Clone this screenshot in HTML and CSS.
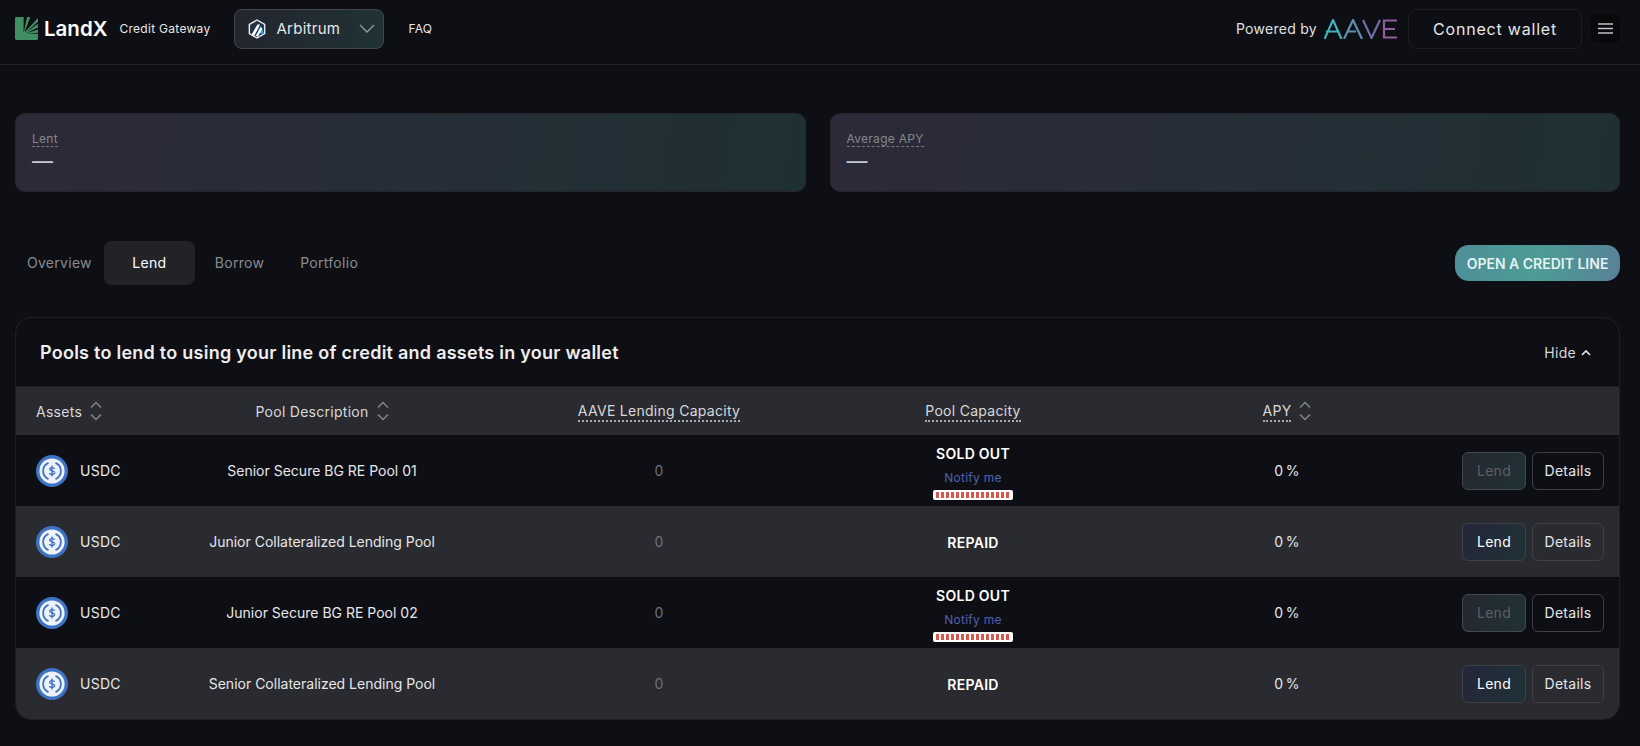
FILE: index.html
```html
<!DOCTYPE html>
<html lang="en">
<head>
    <meta charset="UTF-8">
    <title>LandX Credit Gateway</title>
    <link rel="stylesheet" href="styles.css">
</head>
<body>
    <header class="topbar">
        <div class="topbar-left">
            <a class="logo">
                <svg class="logo-mark" width="23" height="23" viewBox="0 0 24 24">
                    <path d="M1.5 0H22.5Q24 0 24 1.5V22.5Q24 24 22.5 24H1.5Q0 24 0 22.5V1.5Q0 0 1.5 0Z" fill="#3f8f63"/>
                    <path d="M9 17 9 0 12.5 0Z M10 16 16 0 24 0 24 1Z M11 16.5 24 5 24 7Z M11.5 17 24 11 24 13Z M12 17.6 24 16.5 24 17.6Z" fill="#0e0f14"/>
                </svg>
                <span class="logo-text">LandX</span>
            </a>
            <span class="brand-sub">Credit Gateway</span>
            <button class="network">
                <svg width="18" height="20" viewBox="0 0 20 22">
                    <path d="M10 1 18.5 6V16L10 21 1.5 16V6Z" fill="#213147" stroke="#e8ecf2" stroke-width="1.6"/>
                    <path d="M11 13 14 8 17.5 15 15.5 17.5Z" fill="#28a0f0"/>
                    <path d="M4 17 10.5 6H13.5L7 18.5Z M8.5 18.5 14.5 8.5 16 11 11 19.5Z" fill="#fff"/>
                </svg>
                <span class="network-name">Arbitrum</span>
                <svg class="network-caret" width="16" height="9" viewBox="0 0 16 9">
                    <path d="M1 1 8 8 15 1" fill="none" stroke="#9a9ca3" stroke-width="1.3"/>
                </svg>
            </button>
            <a class="faq">FAQ</a>
        </div>
        <div class="topbar-right">
            <span class="powered">Powered by</span>
            <svg class="aave" width="73" height="20" viewBox="0 0 73 20" fill="none" stroke-width="2.2">
                <path d="M0.5 20 9 1 17.5 20M2 12.5H14" stroke="#46b0ba"/>
                <path d="M20 20 29 1 38 20M23 12.5H32" stroke="#5f8fae"/>
                <path d="M39 1 47.5 19 56 1" stroke="#716da0"/>
                <path d="M73 1.5H60V18.5H73M60 10H71" stroke="#8f5f9d"/>
            </svg>
            <button class="connect">Connect wallet</button>
            <button class="menu">
                <svg width="15" height="11" viewBox="0 0 15 11">
                    <path d="M0 1H15M0 5.5H15M0 10H15" stroke="#c0c1c5" stroke-width="1.7"/>
                </svg>
            </button>
        </div>
    </header>

    <main class="page">
        <section class="stats">
            <div class="stat">
                <span class="stat-label">Lent</span>
                <span class="stat-value">—</span>
            </div>
            <div class="stat">
                <span class="stat-label">Average APY</span>
                <span class="stat-value">—</span>
            </div>
        </section>

        <nav class="tabs">
            <a class="tab">Overview</a>
            <a class="tab tab-active">Lend</a>
            <a class="tab">Borrow</a>
            <a class="tab">Portfolio</a>
            <button class="open-credit">OPEN A CREDIT LINE</button>
        </nav>

        <section class="pools">
            <div class="pools-title">
                <h2>Pools to lend to using your line of credit and assets in your wallet</h2>
                <a class="hide">Hide
                    <svg width="10" height="7" viewBox="0 0 10 7"><path d="M1 6 5 2 9 6" fill="none" stroke="#e6e6e8" stroke-width="1.6"/></svg>
                </a>
            </div>

            <div class="row row-head">
                <div class="cell-asset">Assets <svg class="sort" width="12" height="20" viewBox="0 0 12 20"><path d="M1 6.5 6 1.5 11 6.5M1 13.5 6 18.5 11 13.5" fill="none" stroke="#85868b" stroke-width="1.5"/></svg></div>
                <div class="cell-desc">Pool Description <svg class="sort" width="12" height="20" viewBox="0 0 12 20"><path d="M1 6.5 6 1.5 11 6.5M1 13.5 6 18.5 11 13.5" fill="none" stroke="#85868b" stroke-width="1.5"/></svg></div>
                <div class="cell-aave"><span class="dotted">AAVE Lending Capacity</span></div>
                <div class="cell-cap"><span class="dotted">Pool Capacity</span></div>
                <div class="cell-apy"><span class="dotted">APY</span> <svg class="sort" width="12" height="20" viewBox="0 0 12 20"><path d="M1 6.5 6 1.5 11 6.5M1 13.5 6 18.5 11 13.5" fill="none" stroke="#85868b" stroke-width="1.5"/></svg></div>
                <div class="cell-actions"></div>
            </div>

            <div class="row">
                <div class="cell-asset">
                    <svg class="coin" width="32" height="32" viewBox="0 0 32 32"><use href="#usdc"/></svg>
                    <span>USDC</span>
                </div>
                <div class="cell-desc">Senior Secure BG RE Pool 01</div>
                <div class="cell-aave muted">0</div>
                <div class="cell-cap">
                    <span class="status">SOLD OUT</span>
                    <a class="notify">Notify me</a>
                    <div class="progress"><div class="progress-fill"></div></div>
                </div>
                <div class="cell-apy">0 %</div>
                <div class="cell-actions">
                    <button class="btn btn-lend" disabled>Lend</button>
                    <button class="btn">Details</button>
                </div>
            </div>

            <div class="row row-alt">
                <div class="cell-asset">
                    <svg class="coin" width="32" height="32" viewBox="0 0 32 32"><use href="#usdc"/></svg>
                    <span>USDC</span>
                </div>
                <div class="cell-desc">Junior Collateralized Lending Pool</div>
                <div class="cell-aave muted">0</div>
                <div class="cell-cap"><span class="status status-repaid">REPAID</span></div>
                <div class="cell-apy">0 %</div>
                <div class="cell-actions">
                    <button class="btn btn-lend">Lend</button>
                    <button class="btn">Details</button>
                </div>
            </div>

            <div class="row">
                <div class="cell-asset">
                    <svg class="coin" width="32" height="32" viewBox="0 0 32 32"><use href="#usdc"/></svg>
                    <span>USDC</span>
                </div>
                <div class="cell-desc">Junior Secure BG RE Pool 02</div>
                <div class="cell-aave muted">0</div>
                <div class="cell-cap">
                    <span class="status">SOLD OUT</span>
                    <a class="notify">Notify me</a>
                    <div class="progress"><div class="progress-fill"></div></div>
                </div>
                <div class="cell-apy">0 %</div>
                <div class="cell-actions">
                    <button class="btn btn-lend" disabled>Lend</button>
                    <button class="btn">Details</button>
                </div>
            </div>

            <div class="row row-alt">
                <div class="cell-asset">
                    <svg class="coin" width="32" height="32" viewBox="0 0 32 32"><use href="#usdc"/></svg>
                    <span>USDC</span>
                </div>
                <div class="cell-desc">Senior Collateralized Lending Pool</div>
                <div class="cell-aave muted">0</div>
                <div class="cell-cap"><span class="status status-repaid">REPAID</span></div>
                <div class="cell-apy">0 %</div>
                <div class="cell-actions">
                    <button class="btn btn-lend">Lend</button>
                    <button class="btn">Details</button>
                </div>
            </div>
        </section>
    </main>

    <svg width="0" height="0" class="defs">
        <symbol id="usdc" viewBox="0 0 32 32">
            <circle cx="16" cy="16" r="16" fill="#3e73c4"/>
            <circle cx="16" cy="16" r="12.6" fill="#eef2f8"/>
            <path d="M12.5 7.9A8.8 8.8 0 0 0 12.5 24.1M19.5 7.9A8.8 8.8 0 0 1 19.5 24.1" fill="none" stroke="#3e73c4" stroke-width="1.8"/>
            <path d="M18.7 13.8C18.2 12.4 14 12 13.7 14.2 13.4 16.4 18.8 15.4 18.6 17.9 18.3 20 14 19.8 13.3 18.3M16 10.6V21.4" fill="none" stroke="#3e73c4" stroke-width="1.4"/>
        </symbol>
    </svg>
</body>
</html>
```
FILE: styles.css
```css
* {
    box-sizing: border-box;
}
body {
    margin: 0;
    background-color: #0e0f14;
    color: #fff;
    font-family: Inter, "Noto Sans", sans-serif;
    font-size: 14px;
    letter-spacing: 0.02em;
}
button {
    font-family: inherit;
    letter-spacing: inherit;
    cursor: pointer;
}
.defs {
    position: absolute;
}
.topbar {
    display: flex;
    justify-content: space-between;
    align-items: center;
    height: 65px;
    padding: 0 20px 7px 15px;
    border-bottom: 1px solid #24252a;
}
.topbar-left, .topbar-right {
    display: flex;
    align-items: center;
}
.logo {
    display: flex;
    align-items: center;
    gap: 6px;
}
.logo-text {
    font-size: 20.5px;
    font-weight: 600;
    letter-spacing: 0;
}
.brand-sub {
    margin-left: 12px;
    font-size: 12px;
    color: #e6e6e8;
}
.network {
    display: flex;
    align-items: center;
    width: 150px;
    height: 40px;
    margin-left: 24px;
    padding: 0 8px 0 13px;
    border: 1px solid #45474e;
    border-radius: 8px;
    background: linear-gradient(100deg, #24252e, #1f3236);
    color: #e6e6e8;
    font-size: 15px;
}
.network-name {
    margin-left: 10px;
}
.network-caret {
    margin-left: auto;
}
.faq {
    margin-left: 24px;
    font-size: 12px;
    color: #e6e6e8;
}
.powered {
    font-size: 14px;
    color: #e0e0e3;
}
.aave {
    margin-left: 7px;
}
.connect {
    width: 174px;
    height: 40px;
    margin-left: 11px;
    border: 1px solid #1d1e23;
    border-radius: 8px;
    background: #0e0f14;
    color: #e6e6e8;
    font-size: 16px;
    letter-spacing: 0.05em;
}
.menu {
    display: flex;
    align-items: center;
    justify-content: center;
    width: 29px;
    height: 29px;
    margin-left: 9px;
    padding: 0;
    border: 0;
    border-radius: 6px;
    background: #08090b;
}
.page {
    padding: 48px 20px 0 15px;
}
.stats {
    display: flex;
    gap: 24px;
}
.stat {
    display: flex;
    flex: 1;
    flex-direction: column;
    align-items: flex-start;
    height: 79px;
    padding: 17px 16px;
    border: 1px solid #24262b;
    border-radius: 10px;
    background: linear-gradient(100deg, #2c2a38, #1f3034);
}
.stat-label {
    border-bottom: 1px dashed #77787e;
    font-size: 12px;
    line-height: 15px;
    color: #85868b;
}
.stat-value {
    font-size: 21px;
    line-height: 29px;
    color: #c9c9cf;
}
.tabs {
    display: flex;
    align-items: center;
    margin-top: 49px;
}
.tab {
    padding: 0 12px;
    line-height: 44px;
    color: #8a8b90;
}
.tab-active {
    width: 91px;
    border-radius: 8px;
    background: #222327;
    color: #fff;
    text-align: center;
}
.tab:nth-child(3) {
    margin-left: 8px;
}
.tab:nth-child(4) {
    margin-left: 12px;
}
.open-credit {
    width: 165px;
    height: 36px;
    margin-left: auto;
    padding: 0;
    border: 0;
    border-radius: 14px;
    background: linear-gradient(100deg, #4f8f99, #4c9c94 50%, #5a8199);
    color: #e4f1f2;
    font-size: 14px;
    font-weight: 600;
    letter-spacing: 0;
}
.pools {
    margin-top: 32px;
    border: 1px solid #1f2025;
    border-radius: 16px;
    overflow: hidden;
}
.pools-title {
    display: flex;
    justify-content: space-between;
    align-items: center;
    height: 68px;
    padding: 0 28px 0 24px;
}
.pools-title h2 {
    margin: 0;
    font-size: 18px;
    font-weight: 600;
    letter-spacing: 0.014em;
    color: #eeeef0;
}
.hide {
    display: flex;
    align-items: center;
    gap: 5px;
    color: #d8d8db;
}
.row {
    display: grid;
    grid-template-columns: 144px 324px 350px 278px 350px 1fr;
    align-items: center;
    height: 71px;
    color: #e6e6e8;
}
.row-alt {
    background: #2a2b30;
}
.row-head {
    height: 49px;
    background: #2a2b30;
    border-top: 1px solid #1f2025;
    color: #d8d8db;
}
.row-head > div {
    display: flex;
    align-items: center;
    justify-content: center;
    gap: 8px;
}
.row-head .cell-asset {
    justify-content: flex-start;
}
.cell-asset {
    display: flex;
    align-items: center;
    gap: 12px;
    padding-left: 20px;
}
.cell-desc {
    text-align: center;
    letter-spacing: 0;
}
.cell-aave {
    text-align: center;
}
.cell-apy {
    text-align: center;
    word-spacing: -2px;
}
.cell-cap {
    display: flex;
    flex-direction: column;
    align-items: center;
}
.cell-actions {
    display: flex;
    justify-content: flex-end;
    gap: 6px;
    padding-right: 16px;
}
.row-head .cell-desc, .row-head .cell-aave, .row-head .cell-cap {
    letter-spacing: 0.02em;
}
.dotted {
    border-bottom: 2px dotted #a8a9ad;
    line-height: 19px;
}
.muted {
    color: #6f7075;
}
.status {
    margin-top: 4px;
    font-weight: 600;
    line-height: 18px;
    color: #fff;
}
.status-repaid {
    margin-top: 3px;
}
.notify {
    margin-top: 7px;
    font-size: 12px;
    line-height: 15px;
    color: #4f61b5;
}
.progress {
    width: 80px;
    height: 10px;
    margin-top: 5px;
    padding: 2px 3px;
    border-radius: 2px;
    background: #fff;
}
.progress-fill {
    height: 100%;
    background: repeating-linear-gradient(90deg, #d9574a 0 3px, #fff 3px 5px);
}
.btn {
    width: 72px;
    height: 38px;
    padding: 0;
    border: 1px solid #3f4046;
    border-radius: 6px;
    background: transparent;
    color: #e6e6e8;
    font-size: 14px;
}
.btn-lend {
    width: 64px;
    background: linear-gradient(110deg, #25263a, #1f3236);
    color: #fff;
}
.btn-lend:disabled {
    border-color: #45474e;
    background: linear-gradient(110deg, #26272f, #1f3236);
    color: #5d5f65;
}
```
